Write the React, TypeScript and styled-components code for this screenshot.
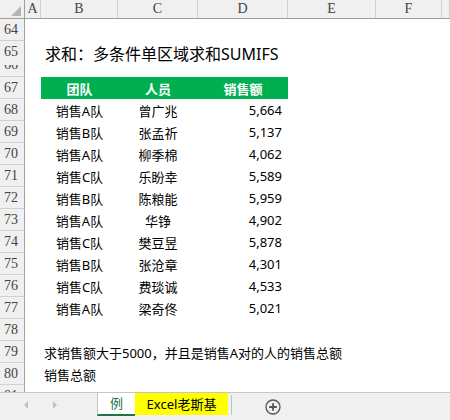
import styled, { createGlobalStyle } from 'styled-components';

const cols = '25px 16px 77px 80px 90px 88px 66px 1fr';
const cjk = '"Noto Sans", "Noto Sans CJK SC", sans-serif';

const rows = [
  ['销售A队', '曾广兆', '5,664'],
  ['销售B队', '张孟祈', '5,137'],
  ['销售A队', '柳季棉', '4,062'],
  ['销售C队', '乐盼幸', '5,589'],
  ['销售B队', '陈粮能', '5,959'],
  ['销售A队', '华铮', '4,902'],
  ['销售C队', '樊豆昱', '5,878'],
  ['销售B队', '张沧章', '4,301'],
  ['销售C队', '费琰诚', '4,533'],
  ['销售A队', '梁奇佟', '5,021']
];

const GlobalStyle = createGlobalStyle`
  html, body {
    margin: 0;
    padding: 0;
    background: #fff;
  }
  #root {
    width: 450px;
    height: 420px;
    overflow: hidden;
  }
`;

const Window = styled.div`
  display: flex;
  flex-direction: column;
  width: 450px;
  height: 420px;
  background: #fff;
  font-family: ${cjk};
  font-size: 13px;
  color: #000;
`;

const Sheet = styled.div`
  flex: 1;
  overflow: hidden;
`;

const HeaderRow = styled.div`
  display: grid;
  grid-template-columns: ${cols};
  height: 19px;
  box-sizing: border-box;
  background: #f0f0f0;
  border-bottom: 1px solid #a0a0a0;
`;

const Corner = styled.div`
  position: relative;
  border-right: 1px solid #a0a0a0;
  &::after {
    content: '';
    position: absolute;
    right: 3px;
    bottom: 2px;
    border-style: solid;
    border-width: 0 0 10px 10px;
    border-color: transparent transparent #b5b5b5 transparent;
  }
`;

const ColHead = styled.div`
  border-right: 1px solid #d0d0d0;
  text-align: center;
  font-family: 'Liberation Serif', serif;
  font-size: 14px;
  line-height: 18px;
  color: #444;
  overflow: hidden;
`;

const Row = styled.div<{ $h?: number }>`
  display: grid;
  grid-template-columns: ${cols};
  height: ${(p) => p.$h ?? 22}px;
  align-items: stretch;
`;

const RowLabel = styled.div`
  box-sizing: border-box;
  background: #f0f0f0;
  border-right: 1px solid #a0a0a0;
  border-bottom: 1px solid #d0d0d0;
  padding-right: 2px;
  text-align: center;
  font-family: 'Liberation Serif', serif;
  font-size: 14px;
  line-height: 21px;
  color: #444;
  overflow: hidden;
`;

const Clipped = styled.span`
  display: block;
  height: 6px;
  margin-top: 2px;
  overflow: hidden;
  line-height: 0;
  padding-top: 0;
`;

const Cell = styled.div<{ $align?: 'left' | 'center' | 'right'; $head?: boolean }>`
  display: flex;
  align-items: center;
  justify-content: ${(p) =>
    p.$align === 'right' ? 'flex-end' : p.$align === 'left' ? 'flex-start' : 'center'};
  padding: 0 ${(p) => (p.$align === 'right' ? 6 : 0)}px 0 0;
  background: ${(p) => (p.$head ? '#00b050' : 'transparent')};
  color: ${(p) => (p.$head ? '#fff' : '#000')};
  font-weight: ${(p) => (p.$head ? 700 : 400)};
  white-space: nowrap;
`;

const Wide = styled.div<{ $size?: number }>`
  grid-column: 3 / -1;
  display: flex;
  align-items: center;
  padding-left: ${(p) => (p.$size ? 4 : 3)}px;
  font-size: ${(p) => p.$size ?? 13}px;
  white-space: nowrap;
`;

const TabBar = styled.div`
  display: flex;
  align-items: flex-start;
  height: 28px;
  box-sizing: border-box;
  background: #f0f0f0;
  border-top: 1px solid #c6c6c6;
`;

const Arrows = styled.div`
  display: flex;
  align-items: center;
  gap: 25px;
  width: 97px;
  height: 24px;
  padding-left: 24px;
  box-sizing: border-box;
`;

const Arrow = styled.span<{ $dir: 'left' | 'right' }>`
  width: 0;
  height: 0;
  border-style: solid;
  border-width: ${(p) => (p.$dir === 'left' ? '4px 4px 4px 0' : '4px 0 4px 4px')};
  border-color: ${(p) =>
    p.$dir === 'left'
      ? 'transparent #c0c0c0 transparent transparent'
      : 'transparent transparent transparent #c0c0c0'};
`;

const Tab = styled.div<{ $active?: boolean; $w: number }>`
  width: ${(p) => p.$w}px;
  height: ${(p) => (p.$active ? 23 : 22)}px;
  box-sizing: border-box;
  display: flex;
  align-items: center;
  justify-content: center;
  background: ${(p) => (p.$active ? '#fff' : '#ffff00')};
  color: ${(p) => (p.$active ? '#217346' : '#000')};
  border-left: ${(p) => (p.$active ? '1px solid #c6c6c6' : 'none')};
  border-bottom: ${(p) => (p.$active ? '2px solid #217346' : 'none')};
  font-size: 13px;
  line-height: 1;
`;

const Divider = styled.div`
  width: 1px;
  height: 20px;
  margin: 2px 0 0 3px;
  background: #c0c0c0;
`;

const AddButton = styled.svg`
  margin: 6px 0 0 33px;
`;

export default function App() {
  return (
    <>
      <GlobalStyle />
      <Window>
        <Sheet>
          <HeaderRow>
            <Corner />
            {['A', 'B', 'C', 'D', 'E', 'F', ''].map((c, i) => (
              <ColHead key={i}>{c}</ColHead>
            ))}
          </HeaderRow>

          <Row>
            <RowLabel>64</RowLabel>
          </Row>
          <Row>
            <RowLabel>65</RowLabel>
            <Wide $size={16}>求和：多条件单区域求和SUMIFS</Wide>
          </Row>
          <Row $h={14}>
            <RowLabel>
              <Clipped>66</Clipped>
            </RowLabel>
          </Row>
          <Row>
            <RowLabel>67</RowLabel>
            <span />
            <Cell $head>团队</Cell>
            <Cell $head>人员</Cell>
            <Cell $head>销售额</Cell>
          </Row>
          {rows.map(([team, name, amount], i) => (
            <Row key={i}>
              <RowLabel>{68 + i}</RowLabel>
              <span />
              <Cell>{team}</Cell>
              <Cell>{name}</Cell>
              <Cell $align="right">{amount}</Cell>
            </Row>
          ))}
          <Row>
            <RowLabel>78</RowLabel>
          </Row>
          <Row>
            <RowLabel>79</RowLabel>
            <Wide>求销售额大于5000，并且是销售A对的人的销售总额</Wide>
          </Row>
          <Row>
            <RowLabel>80</RowLabel>
            <Wide>销售总额</Wide>
          </Row>
          <Row>
            <RowLabel>81</RowLabel>
          </Row>
        </Sheet>

        <TabBar>
          <Arrows>
            <Arrow $dir="left" />
            <Arrow $dir="right" />
          </Arrows>
          <Tab $active $w={38}>例</Tab>
          <Tab $w={93}>Excel老斯基</Tab>
          <Divider />
          <AddButton width="16" height="16" viewBox="0 0 16 16">
            <circle cx="8" cy="8" r="7" fill="none" stroke="#555" strokeWidth="1.3" />
            <path d="M8 4.2v7.6M4.2 8h7.6" stroke="#555" strokeWidth="1.8" />
          </AddButton>
        </TabBar>
      </Window>
    </>
  );
}
